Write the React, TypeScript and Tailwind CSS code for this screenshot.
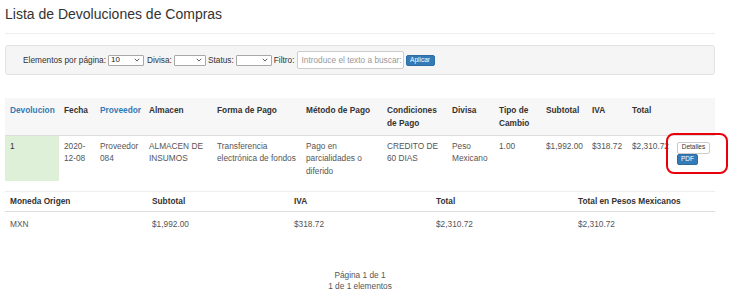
import { ChevronDown } from 'lucide-react';

const columns = [
  { label: 'Devolucion', width: 54, link: true },
  { label: 'Fecha', width: 36 },
  { label: 'Proveedor', width: 49, link: true },
  { label: 'Almacen', width: 68 },
  { label: 'Forma de Pago', width: 89 },
  { label: 'Método de Pago', width: 81 },
  { label: 'Condiciones de Pago', width: 65 },
  { label: 'Divisa', width: 47 },
  { label: 'Tipo de Cambio', width: 47 },
  { label: 'Subtotal', width: 46 },
  { label: 'IVA', width: 40 },
  { label: 'Total', width: 45 },
  { label: '', width: 43 },
];

const row = [
  '2020-12-08',
  'Proveedor 084',
  'ALMACEN DE INSUMOS',
  'Transferencia electrónica de fondos',
  'Pago en parcialidades o diferido',
  'CREDITO DE 60 DIAS',
  'Peso Mexicano',
  '1.00',
  '$1,992.00',
  '$318.72',
  '$2,310.72',
];

function FakeSelect({ value, width }: { value?: string; width: number }) {
  return (
    <div
      className="h-[11px] border border-[#a9a9a9] bg-white rounded-[1px] flex items-center justify-between pl-[2px] pr-[2px] text-[8px] leading-none text-[#222]"
      style={{ width }}
    >
      <span>{value}</span>
      <ChevronDown size={8} strokeWidth={2.5} className="text-[#444]" />
    </div>
  );
}

export default function App() {
  return (
    <div className="w-[735px] h-[297px] bg-white text-[#333] font-['Liberation_Sans',Arial,sans-serif] overflow-hidden">
      <div className="w-[710px] ml-[5px]">
        <h2 className="text-[14px] leading-[20px] pt-[4px] font-normal text-[#333]">
          Lista de Devoluciones de Compras
        </h2>
        <div className="mt-[9px] border-t border-[#eee]"></div>

        {/* Filtros */}
        <div className="mt-[11px] h-[30px] bg-[#f5f5f5] border border-[#e3e3e3] rounded-[3px] flex items-center pl-[17px] gap-[2px] text-[8.3px] leading-none">
          <span>Elementos por página:</span>
          <FakeSelect value="10" width={36} />
          <span className="ml-[1px]">Divisa:</span>
          <FakeSelect width={32} />
          <span>Status:</span>
          <FakeSelect width={36} />
          <span>Filtro:</span>
          <div className="w-[107px] h-[18px] border border-[#ccc] bg-white rounded-[2px] flex items-center pl-[4px] text-[#999] text-[8.3px]">
            Introduce el texto a buscar:
          </div>
          <button className="w-[29px] h-[11px] bg-[#337ab7] border border-[#2e6da4] rounded-[2px] text-white text-[6.5px] leading-none flex items-center justify-center">
            Aplicar
          </button>
        </div>

        {/* Tabla principal */}
        <div className="relative mt-[23px]">
          <table className="w-[710px] table-fixed border-collapse text-[8.3px] leading-[12.5px]">
            <colgroup>
              {columns.map((c, i) => (
                <col key={i} style={{ width: c.width }} />
              ))}
            </colgroup>
            <thead>
              <tr className="bg-[#f7f7f7] border-b border-[#ddd]">
                {columns.map((c, i) => (
                  <th
                    key={i}
                    className={`text-left align-top font-bold px-[5px] pt-[6px] pb-[5px] h-[37px] ${
                      c.link ? 'text-[#337ab7]' : 'text-[#333]'
                    }`}
                  >
                    {c.label}
                  </th>
                ))}
              </tr>
            </thead>
            <tbody>
              <tr>
                <td className="bg-[#dff0d8] align-top px-[5px] pt-[4px] pb-[4px] h-[45px]">1</td>
                {row.map((v, i) => (
                  <td key={i} className="align-top px-[5px] pt-[4px] pb-[4px] text-[#555] whitespace-normal">
                    {i === 10 ? <span className="whitespace-nowrap">{v}</span> : v}
                  </td>
                ))}
                <td className="align-top pl-[5px] pt-[6px] relative">
                  <div className="flex flex-col items-start">
                    <button className="h-[12px] w-[33px] bg-white border border-[#ccc] rounded-[2px] text-[6.5px] leading-none text-[#333] flex items-center justify-center">
                      Detalles
                    </button>
                    <button className="h-[11px] w-[21px] bg-[#337ab7] border border-[#2e6da4] rounded-[2px] text-[6.5px] leading-none text-white flex items-center justify-center">
                      PDF
                    </button>
                  </div>
                </td>
              </tr>
            </tbody>
          </table>
          {/* Resaltado rojo */}
          <div className="absolute left-[661px] top-[35px] w-[62px] h-[41px] border-2 border-[#e8000b] rounded-[8px] pointer-events-none"></div>
        </div>

        {/* Tabla de totales */}
        <table className="mt-[10px] w-[710px] table-fixed border-collapse text-[8.3px] leading-[12.5px] border-t border-[#eee]">
          <thead>
            <tr className="border-b border-[#ddd]">
              {['Moneda Origen', 'Subtotal', 'IVA', 'Total', 'Total en Pesos Mexicanos'].map((h) => (
                <th key={h} className="text-left font-bold px-[5px] pt-[3px] pb-[3px] h-[20px] text-[#333]">
                  {h}
                </th>
              ))}
            </tr>
          </thead>
          <tbody>
            <tr>
              {['MXN', '$1,992.00', '$318.72', '$2,310.72', '$2,310.72'].map((v, i) => (
                <td key={i} className="px-[5px] pt-[6px] pb-[4px] text-[#555]">
                  {v}
                </td>
              ))}
            </tr>
          </tbody>
        </table>

        {/* Paginación */}
        <div className="mt-[35px] text-center text-[8.3px] leading-[11.5px] text-[#555]">
          <div>Página 1 de 1</div>
          <div>1 de 1 elementos</div>
        </div>
      </div>
    </div>
  );
}
